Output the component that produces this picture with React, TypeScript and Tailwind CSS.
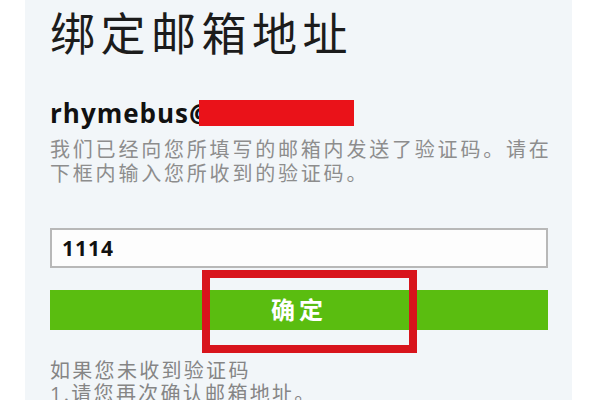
import { useState } from 'react';

export default function App() {
  const [code, setCode] = useState('1114');

  return (
    <div className="w-[600px] h-[400px] overflow-hidden bg-white flex" style={{ fontFamily: '"Open Sans", "Noto Sans CJK SC", sans-serif' }}>
      <div className="w-[25px] shrink-0" />
      <div className="w-[547px] shrink-0 bg-[#f2f6f9] px-[25px] pt-[9px] overflow-hidden">
        <h1 className="text-[45px] leading-[50px] tracking-[5.5px] text-[#1c1c1c] font-normal whitespace-nowrap">
          绑定邮箱地址
        </h1>

        <div className="mt-[39px] h-[30px] flex items-center whitespace-nowrap">
          <span className="text-[26px] leading-[30px] font-bold tracking-[1px] text-[#111]">rhymebus@</span>
          <span className="inline-block w-[155px] h-[26px] bg-[#ea1219] -ml-[14px]" />
        </div>

        <div className="mt-[10px] text-[20px] leading-[24px] tracking-[2.8px] text-[#8d8d8d] whitespace-nowrap">
          <div>我们已经向您所填写的邮箱内发送了验证码。请在</div>
          <div>下框内输入您所收到的验证码。</div>
        </div>

        <input
          value={code}
          onChange={(e) => setCode(e.target.value)}
          className="block mt-[42px] w-[498px] h-[40px] bg-[#fdfdfd] border-2 border-[#b8b8b8] px-[10px] text-[21px] font-bold tracking-[1px] text-[#111] outline-none"
        />

        <div className="relative mt-[22px]">
          <button className="w-[498px] h-[40px] bg-[#5abd10] text-white text-[24px] font-bold tracking-[4px] flex items-center justify-center">
            确定
          </button>
          <div className="absolute left-[152px] top-[-20px] w-[215px] h-[83px] border-[8px] border-[#d8141c] pointer-events-none" />
        </div>

        <div className="mt-[29px] text-[20px] leading-[23px] tracking-[2.3px] text-[#858585] whitespace-nowrap">
          <div>如果您未收到验证码</div>
          <div>1.请您再次确认邮箱地址。</div>
        </div>
      </div>
      <div className="flex-1" />
    </div>
  );
}
